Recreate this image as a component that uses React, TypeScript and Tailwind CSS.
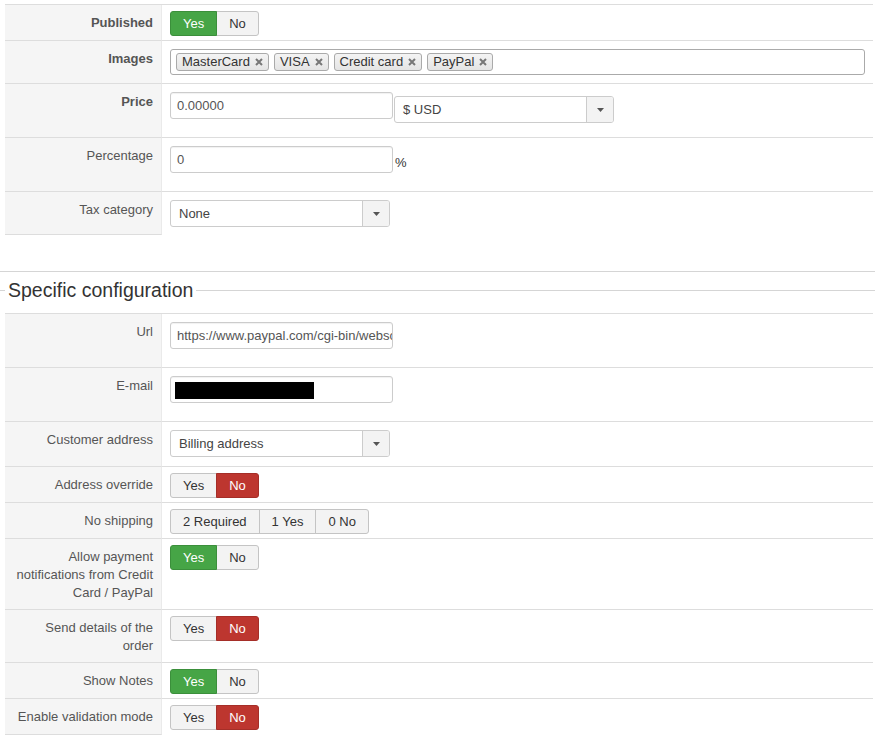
import React from "react";

type BtnKind = "off" | "green" | "red";

function Btn({ kind, children, first, last }: { kind: BtnKind; children: React.ReactNode; first?: boolean; last?: boolean }) {
  const base = "h-[25px] px-[12px] flex items-center text-[13px] leading-[18px] border";
  const color =
    kind === "green"
      ? "bg-[#46a546] border-[#3b8f3b] text-white relative z-10"
      : kind === "red"
      ? "bg-[#bd362f] border-[#a52e28] text-white relative z-10"
      : "bg-[#f3f3f3] border-[#c4c4c4] text-[#333]";
  const r = `${first ? "rounded-l-[3px]" : "-ml-px"} ${last ? "rounded-r-[3px]" : ""}`;
  return <div className={`${base} ${color} ${r}`}>{children}</div>;
}

function YesNo({ value }: { value: "yes" | "no" }) {
  return (
    <div className="flex">
      <Btn kind={value === "yes" ? "green" : "off"} first>
        Yes
      </Btn>
      <Btn kind={value === "no" ? "red" : "off"} last>
        No
      </Btn>
    </div>
  );
}

function Row({
  label,
  bold,
  last,
  pad,
  children,
}: {
  label: React.ReactNode;
  bold?: boolean;
  last?: boolean;
  pad: string;
  children: React.ReactNode;
}) {
  return (
    <div className="flex">
      <div
        className={`w-[157px] shrink-0 bg-[#f5f5f5] border-b border-b-[#ddd] border-r border-r-[#eaeaea] pl-[9px] pr-[8px] pt-[9px] pb-[7px] text-right text-[13px] leading-[18px] text-[#555] ${
          bold ? "font-bold" : ""
        }`}
      >
        {label}
      </div>
      <div className={`flex-1 min-w-0 px-[8px] ${pad} ${last ? "" : "border-b border-b-[#ddd]"}`}>{children}</div>
    </div>
  );
}

function TextInput({ value, children }: { value?: string; children?: React.ReactNode }) {
  return (
    <div className="w-[223px] h-[27px] border border-[#ccc] rounded-[3px] bg-white flex items-center pl-[6px] pr-[2px] pt-[1px] overflow-hidden whitespace-nowrap text-[13px] text-[#555] shadow-[inset_0_1px_1px_rgba(0,0,0,0.06)]">
      {value}
      {children}
    </div>
  );
}

function Select({ value, width }: { value: string; width: string }) {
  return (
    <div className={`${width} h-[27px] border border-[#ccc] rounded-[3px] bg-white flex text-[13px] text-[#444] overflow-hidden`}>
      <div className="flex-1 flex items-center pl-[8px] pt-[1px]">{value}</div>
      <div className="w-[27px] border-l border-l-[#ccc] bg-[#f3f3f3] flex items-center justify-center">
        <svg width="7" height="4" viewBox="0 0 7 4">
          <path d="M0 0 L7 0 L3.5 4 Z" fill="#555" />
        </svg>
      </div>
    </div>
  );
}

function Tag({ text }: { text: string }) {
  return (
    <div className="h-[18px] flex items-center gap-[5px] pl-[5px] pr-[5px] border border-[#aaa] rounded-[3px] bg-gradient-to-b from-[#f4f4f4] to-[#e4e4e4] text-[13px] leading-[16px] text-[#333]">
      <span>{text}</span>
      <svg width="8" height="8" viewBox="0 0 8 8">
        <path d="M1 1 L7 7 M7 1 L1 7" stroke="#777" strokeWidth="2" />
      </svg>
    </div>
  );
}

export default function App() {
  return (
    <div className="w-[875px] bg-white font-['Liberation_Sans',Arial,sans-serif] pt-[4px] pb-[2px]">
      {/* first table */}
      <div className="ml-[5px] w-[868px] border-t border-t-[#ddd]">
        <Row label="Published" bold pad="pt-[6px] pb-[4px]">
          <YesNo value="yes" />
        </Row>
        <Row label="Images" bold pad="pt-[8px] pb-[8px]">
          <div className="w-full h-[26px] border border-[#aaa] rounded-[3px] bg-white flex items-center gap-[5px] pl-[5px]">
            <Tag text="MasterCard" />
            <Tag text="VISA" />
            <Tag text="Credit card" />
            <Tag text="PayPal" />
          </div>
        </Row>
        <Row label="Price" bold pad="pt-[8px] pb-[8px]">
          <div className="flex items-start gap-[1px]">
            <div className="mb-[10px]">
              <TextInput value="0.00000" />
            </div>
            <div className="mt-[4px]">
              <Select value="$ USD" width="w-[220px]" />
            </div>
          </div>
        </Row>
        <Row label="Percentage" pad="pt-[8px] pb-[8px]">
          <div className="flex items-start gap-[2px]">
            <div className="mb-[10px]">
              <TextInput value="0" />
            </div>
            <span className="mt-[8px] text-[13px] leading-[18px] text-[#333]">%</span>
          </div>
        </Row>
        <Row label="Tax category" last pad="pt-[8px] pb-[8px]">
          <Select value="None" width="w-[220px]" />
        </Row>
      </div>

      {/* separator */}
      <div className="mt-[36px] border-t border-t-[#d5d5d5]" />
      <div className="pt-[6px] pb-[11px]">
        <div className="h-[24px] flex items-center">
          <div className="w-[5px] border-t border-t-[#d5d5d5]" />
          <div className="px-[3px] text-[19.5px] leading-[24px] text-[#333]">Specific configuration</div>
          <div className="flex-1 border-t border-t-[#d5d5d5]" />
        </div>
      </div>

      {/* second table */}
      <div className="ml-[5px] w-[868px] border-t border-t-[#ddd]">
        <Row label="Url" pad="pt-[8px] pb-[8px]">
          <div className="mb-[10px]">
            <TextInput value="https://www.paypal.com/cgi-bin/webscr" />
          </div>
        </Row>
        <Row label="E-mail" pad="pt-[8px] pb-[8px]">
          <div className="mb-[10px]">
            <TextInput>
              <div className="ml-[-2px] w-[139px] h-[17px] bg-black" />
            </TextInput>
          </div>
        </Row>
        <Row label="Customer address" pad="pt-[8px] pb-[9px]">
          <Select value="Billing address" width="w-[220px]" />
        </Row>
        <Row label="Address override" pad="pt-[6px] pb-[4px]">
          <YesNo value="no" />
        </Row>
        <Row label="No shipping" pad="pt-[6px] pb-[4px]">
          <div className="flex">
            <Btn kind="off" first>
              2 Required
            </Btn>
            <Btn kind="off">1 Yes</Btn>
            <Btn kind="off" last>
              0 No
            </Btn>
          </div>
        </Row>
        <Row label="Allow payment notifications from Credit Card / PayPal" pad="pt-[6px] pb-[4px]">
          <YesNo value="yes" />
        </Row>
        <Row label="Send details of the order" pad="pt-[6px] pb-[4px]">
          <YesNo value="no" />
        </Row>
        <Row label="Show Notes" pad="pt-[6px] pb-[4px]">
          <YesNo value="yes" />
        </Row>
        <Row label="Enable validation mode" last pad="pt-[6px] pb-[5px]">
          <YesNo value="no" />
        </Row>
      </div>
    </div>
  );
}
